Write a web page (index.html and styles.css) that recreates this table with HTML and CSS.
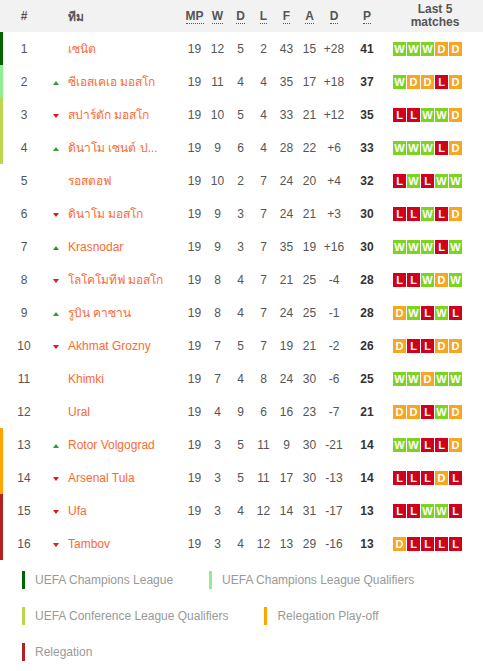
FILE: index.html
```html
<!DOCTYPE html>
<html lang="th">
<head>
<meta charset="utf-8">
<title>Standings</title>
<link rel="stylesheet" href="styles.css">
</head>
<body>
<div class="standings">
  <div class="row head">
    <div class="c-pos">#</div>
    <div class="c-arrow"></div>
    <div class="c-team">ทีม</div>
    <div class="c-num"><abbr title="Matches played">MP</abbr></div>
    <div class="c-num"><abbr title="Wins">W</abbr></div>
    <div class="c-num"><abbr title="Draws">D</abbr></div>
    <div class="c-num"><abbr title="Losses">L</abbr></div>
    <div class="c-num"><abbr title="Goals for">F</abbr></div>
    <div class="c-num"><abbr title="Goals against">A</abbr></div>
    <div class="c-num"><abbr title="Goal difference">D</abbr></div>
    <div class="c-num"><abbr title="Points">P</abbr></div>
    <div class="c-last">Last 5<br>matches</div>
  </div>

  <div class="row z-ucl">
    <div class="c-pos">1</div><div class="c-arrow"></div><div class="c-team">เซนิต</div>
    <div class="c-num">19</div><div class="c-num">12</div><div class="c-num">5</div><div class="c-num">2</div><div class="c-num">43</div><div class="c-num">15</div><div class="c-num">+28</div><div class="c-num pts">41</div>
    <div class="c-last"><span class="b w">W</span><span class="b w">W</span><span class="b w">W</span><span class="b d">D</span><span class="b d">D</span></div>
  </div>

  <div class="row z-uclq">
    <div class="c-pos">2</div><div class="c-arrow"><span class="up"></span></div><div class="c-team">ซีเอสเคเอ มอสโก</div>
    <div class="c-num">19</div><div class="c-num">11</div><div class="c-num">4</div><div class="c-num">4</div><div class="c-num">35</div><div class="c-num">17</div><div class="c-num">+18</div><div class="c-num pts">37</div>
    <div class="c-last"><span class="b w">W</span><span class="b d">D</span><span class="b d">D</span><span class="b l">L</span><span class="b d">D</span></div>
  </div>

  <div class="row z-ecl">
    <div class="c-pos">3</div><div class="c-arrow"><span class="down"></span></div><div class="c-team">สปาร์ตัก มอสโก</div>
    <div class="c-num">19</div><div class="c-num">10</div><div class="c-num">5</div><div class="c-num">4</div><div class="c-num">33</div><div class="c-num">21</div><div class="c-num">+12</div><div class="c-num pts">35</div>
    <div class="c-last"><span class="b l">L</span><span class="b l">L</span><span class="b w">W</span><span class="b w">W</span><span class="b d">D</span></div>
  </div>

  <div class="row z-ecl">
    <div class="c-pos">4</div><div class="c-arrow"><span class="up"></span></div><div class="c-team">ดินาโม เซนต์ ป...</div>
    <div class="c-num">19</div><div class="c-num">9</div><div class="c-num">6</div><div class="c-num">4</div><div class="c-num">28</div><div class="c-num">22</div><div class="c-num">+6</div><div class="c-num pts">33</div>
    <div class="c-last"><span class="b w">W</span><span class="b w">W</span><span class="b w">W</span><span class="b l">L</span><span class="b d">D</span></div>
  </div>

  <div class="row">
    <div class="c-pos">5</div><div class="c-arrow"></div><div class="c-team">รอสตอฟ</div>
    <div class="c-num">19</div><div class="c-num">10</div><div class="c-num">2</div><div class="c-num">7</div><div class="c-num">24</div><div class="c-num">20</div><div class="c-num">+4</div><div class="c-num pts">32</div>
    <div class="c-last"><span class="b l">L</span><span class="b w">W</span><span class="b l">L</span><span class="b w">W</span><span class="b w">W</span></div>
  </div>

  <div class="row">
    <div class="c-pos">6</div><div class="c-arrow"><span class="down"></span></div><div class="c-team">ดินาโม มอสโก</div>
    <div class="c-num">19</div><div class="c-num">9</div><div class="c-num">3</div><div class="c-num">7</div><div class="c-num">24</div><div class="c-num">21</div><div class="c-num">+3</div><div class="c-num pts">30</div>
    <div class="c-last"><span class="b l">L</span><span class="b l">L</span><span class="b w">W</span><span class="b l">L</span><span class="b d">D</span></div>
  </div>

  <div class="row">
    <div class="c-pos">7</div><div class="c-arrow"><span class="up"></span></div><div class="c-team">Krasnodar</div>
    <div class="c-num">19</div><div class="c-num">9</div><div class="c-num">3</div><div class="c-num">7</div><div class="c-num">35</div><div class="c-num">19</div><div class="c-num">+16</div><div class="c-num pts">30</div>
    <div class="c-last"><span class="b w">W</span><span class="b w">W</span><span class="b w">W</span><span class="b l">L</span><span class="b w">W</span></div>
  </div>

  <div class="row">
    <div class="c-pos">8</div><div class="c-arrow"><span class="down"></span></div><div class="c-team">โลโคโมทีฟ มอสโก</div>
    <div class="c-num">19</div><div class="c-num">8</div><div class="c-num">4</div><div class="c-num">7</div><div class="c-num">21</div><div class="c-num">25</div><div class="c-num">-4</div><div class="c-num pts">28</div>
    <div class="c-last"><span class="b l">L</span><span class="b l">L</span><span class="b w">W</span><span class="b d">D</span><span class="b w">W</span></div>
  </div>

  <div class="row">
    <div class="c-pos">9</div><div class="c-arrow"><span class="up"></span></div><div class="c-team">รูบิน คาซาน</div>
    <div class="c-num">19</div><div class="c-num">8</div><div class="c-num">4</div><div class="c-num">7</div><div class="c-num">24</div><div class="c-num">25</div><div class="c-num">-1</div><div class="c-num pts">28</div>
    <div class="c-last"><span class="b d">D</span><span class="b w">W</span><span class="b l">L</span><span class="b w">W</span><span class="b l">L</span></div>
  </div>

  <div class="row">
    <div class="c-pos">10</div><div class="c-arrow"><span class="down"></span></div><div class="c-team">Akhmat Grozny</div>
    <div class="c-num">19</div><div class="c-num">7</div><div class="c-num">5</div><div class="c-num">7</div><div class="c-num">19</div><div class="c-num">21</div><div class="c-num">-2</div><div class="c-num pts">26</div>
    <div class="c-last"><span class="b d">D</span><span class="b l">L</span><span class="b l">L</span><span class="b d">D</span><span class="b d">D</span></div>
  </div>

  <div class="row">
    <div class="c-pos">11</div><div class="c-arrow"></div><div class="c-team">Khimki</div>
    <div class="c-num">19</div><div class="c-num">7</div><div class="c-num">4</div><div class="c-num">8</div><div class="c-num">24</div><div class="c-num">30</div><div class="c-num">-6</div><div class="c-num pts">25</div>
    <div class="c-last"><span class="b w">W</span><span class="b w">W</span><span class="b d">D</span><span class="b w">W</span><span class="b w">W</span></div>
  </div>

  <div class="row">
    <div class="c-pos">12</div><div class="c-arrow"></div><div class="c-team">Ural</div>
    <div class="c-num">19</div><div class="c-num">4</div><div class="c-num">9</div><div class="c-num">6</div><div class="c-num">16</div><div class="c-num">23</div><div class="c-num">-7</div><div class="c-num pts">21</div>
    <div class="c-last"><span class="b d">D</span><span class="b d">D</span><span class="b l">L</span><span class="b w">W</span><span class="b d">D</span></div>
  </div>

  <div class="row z-rpo">
    <div class="c-pos">13</div><div class="c-arrow"><span class="up"></span></div><div class="c-team">Rotor Volgograd</div>
    <div class="c-num">19</div><div class="c-num">3</div><div class="c-num">5</div><div class="c-num">11</div><div class="c-num">9</div><div class="c-num">30</div><div class="c-num">-21</div><div class="c-num pts">14</div>
    <div class="c-last"><span class="b w">W</span><span class="b w">W</span><span class="b l">L</span><span class="b l">L</span><span class="b d">D</span></div>
  </div>

  <div class="row z-rpo">
    <div class="c-pos">14</div><div class="c-arrow"><span class="down"></span></div><div class="c-team">Arsenal Tula</div>
    <div class="c-num">19</div><div class="c-num">3</div><div class="c-num">5</div><div class="c-num">11</div><div class="c-num">17</div><div class="c-num">30</div><div class="c-num">-13</div><div class="c-num pts">14</div>
    <div class="c-last"><span class="b l">L</span><span class="b l">L</span><span class="b l">L</span><span class="b d">D</span><span class="b l">L</span></div>
  </div>

  <div class="row z-rel">
    <div class="c-pos">15</div><div class="c-arrow"><span class="down"></span></div><div class="c-team">Ufa</div>
    <div class="c-num">19</div><div class="c-num">3</div><div class="c-num">4</div><div class="c-num">12</div><div class="c-num">14</div><div class="c-num">31</div><div class="c-num">-17</div><div class="c-num pts">13</div>
    <div class="c-last"><span class="b l">L</span><span class="b l">L</span><span class="b w">W</span><span class="b w">W</span><span class="b l">L</span></div>
  </div>

  <div class="row z-rel">
    <div class="c-pos">16</div><div class="c-arrow"><span class="down"></span></div><div class="c-team">Tambov</div>
    <div class="c-num">19</div><div class="c-num">3</div><div class="c-num">4</div><div class="c-num">12</div><div class="c-num">13</div><div class="c-num">29</div><div class="c-num">-16</div><div class="c-num pts">13</div>
    <div class="c-last"><span class="b d">D</span><span class="b l">L</span><span class="b l">L</span><span class="b l">L</span><span class="b l">L</span></div>
  </div>
</div>

<div class="legend">
  <div class="item"><span class="mark m-ucl"></span>UEFA Champions League</div>
  <div class="item"><span class="mark m-uclq"></span>UEFA Champions League Qualifiers</div>
  <div class="item"><span class="mark m-ecl"></span>UEFA Conference League Qualifiers</div>
  <div class="item"><span class="mark m-rpo"></span>Relegation Play-off</div>
  <div class="item"><span class="mark m-rel"></span>Relegation</div>
</div>
</body>
</html>
```
FILE: styles.css
```css
* { box-sizing: border-box; }

body {
  margin: 0;
  background: #fff;
  font-family: "Liberation Sans", Arial, sans-serif;
  font-size: 12px;
  color: #555;
}

.standings {
  display: flex;
  flex-direction: column;
}

.row {
  display: grid;
  grid-template-columns: 42px 20px 118px 23px 23px 23px 23px 23px 23px 26px 40px 1fr;
  align-items: center;
  height: 33px;
  border-left: 3px solid transparent;
  background: #fff;
}

.row.head {
  height: 32px;
  background: #f2f2f2;
  border-left-color: #f2f2f2;
  font-weight: bold;
  color: #555;
}

.z-ucl { border-left-color: #006400; }
.z-uclq { border-left-color: #90ee90; }
.z-ecl { border-left-color: #bcd64f; }
.z-rpo { border-left-color: #ffa500; }
.z-rel { border-left-color: #b22222; }

.c-pos { text-align: center; }

.c-arrow {
  display: flex;
  justify-content: center;
  align-items: center;
  padding-left: 2px;
}

.up {
  width: 0;
  height: 0;
  border-left: 3.5px solid transparent;
  border-right: 3.5px solid transparent;
  border-bottom: 4px solid #2e9b2e;
  margin-top: 3px;
}

.down {
  width: 0;
  height: 0;
  border-left: 3.5px solid transparent;
  border-right: 3.5px solid transparent;
  border-top: 4px solid #e0161b;
  margin-top: 3px;
}

.c-team {
  padding-left: 3px;
  color: #fa6b33;
  white-space: nowrap;
  overflow: hidden;
}

.head .c-team { color: #555; }

.c-num { text-align: center; white-space: nowrap; }

.pts { font-weight: bold; color: #333; }

abbr {
  text-decoration: none;
  border-bottom: 1px dotted #555;
  cursor: help;
}

.c-last {
  display: flex;
  gap: 1px;
  padding-left: 6px;
}

.head .c-last {
  display: block;
  padding-left: 0;
  text-align: center;
  line-height: 13px;
}

.b {
  width: 13px;
  height: 14px;
  display: flex;
  align-items: center;
  justify-content: center;
  color: #fff;
  font-weight: bold;
  font-size: 11px;
}

.b.w { background: #7ed321; }
.b.d { background: #f5a623; }
.b.l { background: #d0021b; }

.legend {
  display: flex;
  flex-wrap: wrap;
  row-gap: 18px;
  padding: 11px 0 0 22px;
  color: #999;
}

.item {
  display: flex;
  align-items: center;
  height: 18px;
  margin-right: 36px;
}

.mark {
  width: 3px;
  height: 18px;
  margin-right: 10px;
}

.m-ucl { background: #006400; }
.m-uclq { background: #90ee90; }
.m-ecl { background: #bcd64f; }
.m-rpo { background: #ffa500; }
.m-rel { background: #b22222; }
```
